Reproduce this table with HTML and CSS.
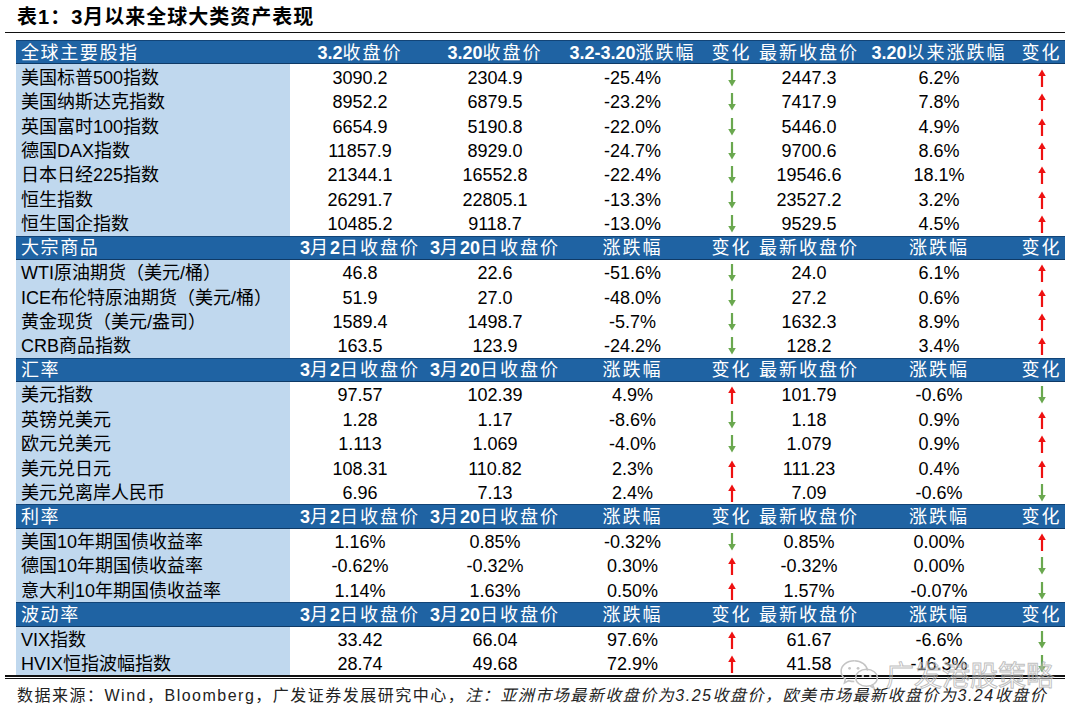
FILE: index.html
```html
<!DOCTYPE html>
<html lang="zh-CN">
<head>
<meta charset="utf-8">
<title>表1：3月以来全球大类资产表现</title>
<link rel="stylesheet" href="styles.css">
</head>
<body>
<svg class="defs" width="0" height="0" aria-hidden="true">
  <defs>
    <symbol id="up" viewBox="0 0 10 18"><line x1="5" y1="4" x2="5" y2="18" stroke="#ee1111" stroke-width="2.2"/><polygon points="1.2,7 5,0.5 8.8,7" fill="#ee1111"/></symbol>
    <symbol id="dn" viewBox="0 0 10 18"><line x1="5" y1="0" x2="5" y2="14" stroke="#6aa84f" stroke-width="2.2"/><polygon points="1.2,11 5,17.5 8.8,11" fill="#6aa84f"/></symbol>
  </defs>
</svg>
<div class="page">
  <div class="title"><b class="num">表1</b>：<b class="num">3</b>月以来全球大类资产表现</div>
  <div class="table">
    <div class="hd lab">全球主要股指</div><div class="hd"><b>3.2</b>收盘价</div><div class="hd"><b>3.20</b>收盘价</div><div class="hd"><b>3.2-3.20</b>涨跌幅</div><div class="hd">变化</div><div class="hd">最新收盘价</div><div class="hd"><b>3.20</b>以来涨跌幅</div><div class="hd">变化</div>

    <div class="lab">美国标普500指数</div><div>3090.2</div><div>2304.9</div><div>-25.4%</div><div><svg class="ar"><use href="#dn"/></svg></div><div>2447.3</div><div>6.2%</div><div><svg class="ar"><use href="#up"/></svg></div>
    <div class="lab">美国纳斯达克指数</div><div>8952.2</div><div>6879.5</div><div>-23.2%</div><div><svg class="ar"><use href="#dn"/></svg></div><div>7417.9</div><div>7.8%</div><div><svg class="ar"><use href="#up"/></svg></div>
    <div class="lab">英国富时100指数</div><div>6654.9</div><div>5190.8</div><div>-22.0%</div><div><svg class="ar"><use href="#dn"/></svg></div><div>5446.0</div><div>4.9%</div><div><svg class="ar"><use href="#up"/></svg></div>
    <div class="lab">德国DAX指数</div><div>11857.9</div><div>8929.0</div><div>-24.7%</div><div><svg class="ar"><use href="#dn"/></svg></div><div>9700.6</div><div>8.6%</div><div><svg class="ar"><use href="#up"/></svg></div>
    <div class="lab">日本日经225指数</div><div>21344.1</div><div>16552.8</div><div>-22.4%</div><div><svg class="ar"><use href="#dn"/></svg></div><div>19546.6</div><div>18.1%</div><div><svg class="ar"><use href="#up"/></svg></div>
    <div class="lab">恒生指数</div><div>26291.7</div><div>22805.1</div><div>-13.3%</div><div><svg class="ar"><use href="#dn"/></svg></div><div>23527.2</div><div>3.2%</div><div><svg class="ar"><use href="#up"/></svg></div>
    <div class="lab">恒生国企指数</div><div>10485.2</div><div>9118.7</div><div>-13.0%</div><div><svg class="ar"><use href="#dn"/></svg></div><div>9529.5</div><div>4.5%</div><div><svg class="ar"><use href="#up"/></svg></div>

    <div class="hd lab">大宗商品</div><div class="hd"><b>3</b>月<b>2</b>日收盘价</div><div class="hd"><b>3</b>月<b>20</b>日收盘价</div><div class="hd">涨跌幅</div><div class="hd">变化</div><div class="hd">最新收盘价</div><div class="hd">涨跌幅</div><div class="hd">变化</div>

    <div class="lab">WTI原油期货（美元/桶）</div><div>46.8</div><div>22.6</div><div>-51.6%</div><div><svg class="ar"><use href="#dn"/></svg></div><div>24.0</div><div>6.1%</div><div><svg class="ar"><use href="#up"/></svg></div>
    <div class="lab">ICE布伦特原油期货（美元/桶）</div><div>51.9</div><div>27.0</div><div>-48.0%</div><div><svg class="ar"><use href="#dn"/></svg></div><div>27.2</div><div>0.6%</div><div><svg class="ar"><use href="#up"/></svg></div>
    <div class="lab">黄金现货（美元/盎司）</div><div>1589.4</div><div>1498.7</div><div>-5.7%</div><div><svg class="ar"><use href="#dn"/></svg></div><div>1632.3</div><div>8.9%</div><div><svg class="ar"><use href="#up"/></svg></div>
    <div class="lab">CRB商品指数</div><div>163.5</div><div>123.9</div><div>-24.2%</div><div><svg class="ar"><use href="#dn"/></svg></div><div>128.2</div><div>3.4%</div><div><svg class="ar"><use href="#up"/></svg></div>

    <div class="hd lab">汇率</div><div class="hd"><b>3</b>月<b>2</b>日收盘价</div><div class="hd"><b>3</b>月<b>20</b>日收盘价</div><div class="hd">涨跌幅</div><div class="hd">变化</div><div class="hd">最新收盘价</div><div class="hd">涨跌幅</div><div class="hd">变化</div>

    <div class="lab">美元指数</div><div>97.57</div><div>102.39</div><div>4.9%</div><div><svg class="ar"><use href="#up"/></svg></div><div>101.79</div><div>-0.6%</div><div><svg class="ar"><use href="#dn"/></svg></div>
    <div class="lab">英镑兑美元</div><div>1.28</div><div>1.17</div><div>-8.6%</div><div><svg class="ar"><use href="#dn"/></svg></div><div>1.18</div><div>0.9%</div><div><svg class="ar"><use href="#up"/></svg></div>
    <div class="lab">欧元兑美元</div><div>1.113</div><div>1.069</div><div>-4.0%</div><div><svg class="ar"><use href="#dn"/></svg></div><div>1.079</div><div>0.9%</div><div><svg class="ar"><use href="#up"/></svg></div>
    <div class="lab">美元兑日元</div><div>108.31</div><div>110.82</div><div>2.3%</div><div><svg class="ar"><use href="#up"/></svg></div><div>111.23</div><div>0.4%</div><div><svg class="ar"><use href="#up"/></svg></div>
    <div class="lab">美元兑离岸人民币</div><div>6.96</div><div>7.13</div><div>2.4%</div><div><svg class="ar"><use href="#up"/></svg></div><div>7.09</div><div>-0.6%</div><div><svg class="ar"><use href="#dn"/></svg></div>

    <div class="hd lab">利率</div><div class="hd"><b>3</b>月<b>2</b>日收盘价</div><div class="hd"><b>3</b>月<b>20</b>日收盘价</div><div class="hd">涨跌幅</div><div class="hd">变化</div><div class="hd">最新收盘价</div><div class="hd">涨跌幅</div><div class="hd">变化</div>

    <div class="lab">美国10年期国债收益率</div><div>1.16%</div><div>0.85%</div><div>-0.32%</div><div><svg class="ar"><use href="#dn"/></svg></div><div>0.85%</div><div>0.00%</div><div><svg class="ar"><use href="#up"/></svg></div>
    <div class="lab">德国10年期国债收益率</div><div>-0.62%</div><div>-0.32%</div><div>0.30%</div><div><svg class="ar"><use href="#up"/></svg></div><div>-0.32%</div><div>0.00%</div><div><svg class="ar"><use href="#dn"/></svg></div>
    <div class="lab">意大利10年期国债收益率</div><div>1.14%</div><div>1.63%</div><div>0.50%</div><div><svg class="ar"><use href="#up"/></svg></div><div>1.57%</div><div>-0.07%</div><div><svg class="ar"><use href="#dn"/></svg></div>

    <div class="hd lab">波动率</div><div class="hd"><b>3</b>月<b>2</b>日收盘价</div><div class="hd"><b>3</b>月<b>20</b>日收盘价</div><div class="hd">涨跌幅</div><div class="hd">变化</div><div class="hd">最新收盘价</div><div class="hd">涨跌幅</div><div class="hd">变化</div>

    <div class="lab">VIX指数</div><div>33.42</div><div>66.04</div><div>97.6%</div><div><svg class="ar"><use href="#up"/></svg></div><div>61.67</div><div>-6.6%</div><div><svg class="ar"><use href="#dn"/></svg></div>
    <div class="lab">HVIX恒指波幅指数</div><div>28.74</div><div>49.68</div><div>72.9%</div><div><svg class="ar"><use href="#up"/></svg></div><div>41.58</div><div>-16.3%</div><div><svg class="ar"><use href="#dn"/></svg></div>
  </div>
  <div class="rule"></div>
  <div class="source">数据来源：Wind，Bloomberg，广发证券发展研究中心，<i>注：亚洲市场最新收盘价为3.25收盘价，欧美市场最新收盘价为3.24收盘价</i></div>

  <div class="watermark">
    <svg class="wx" viewBox="0 0 44 34" aria-hidden="true">
      <path d="M17 3C9 3 3 8 3 14c0 3.4 1.8 6.3 4.6 8.3L6.5 26.5l4.6-2.4c1.8.6 3.8.9 5.9.9" fill="none" stroke="#c4c4c4" stroke-width="1.6"/>
      <path d="M17 3c7.5 0 13.5 4.6 14 10.4" fill="none" stroke="#c4c4c4" stroke-width="1.6"/>
      <ellipse cx="30" cy="21" rx="11.5" ry="9" fill="none" stroke="#c4c4c4" stroke-width="1.6"/>
      <path d="M36.5 28.5l1.6 3.6-4.2-2.2" fill="none" stroke="#c4c4c4" stroke-width="1.6"/>
      <circle cx="12" cy="11" r="1.5" fill="#c4c4c4"/><circle cx="21" cy="11" r="1.5" fill="#c4c4c4"/>
      <circle cx="26" cy="19" r="1.3" fill="#c4c4c4"/><circle cx="34" cy="19" r="1.3" fill="#c4c4c4"/>
    </svg>
    <span class="wm-text">广发港股策略</span>
  </div>
</div>
</body>
</html>
```

FILE: styles.css
```css
html, body {
  margin: 0;
  padding: 0;
  background: #ffffff;
}
.defs {
  position: absolute;
  width: 0;
  height: 0;
}
.page {
  position: relative;
  width: 1060px;
  padding-left: 5px;
  font-family: "Liberation Sans", "Noto Sans CJK SC", sans-serif;
  color: #000;
}
.title {
  height: 32px;
  line-height: 35px;
  padding-left: 12px;
  font-size: 20px;
  font-weight: 700;
  letter-spacing: 1px;
  border-bottom: 1.5px solid #111;
}
.title .num {
  font-weight: 700;
}
.table {
  margin-top: 7px;
  margin-left: 11px;
  display: grid;
  grid-template-columns: 274px 140px 130px 145px 53px 102px 158px 47px;
  grid-auto-rows: 24.45px;
  font-size: 18px;
}
.table > div {
  display: flex;
  align-items: center;
  justify-content: center;
  white-space: nowrap;
  line-height: 1;
  padding-top: 2px;
  box-sizing: border-box;
}
.table > .lab {
  justify-content: flex-start;
  padding-left: 5px;
  background: #c0d8ee;
  font-weight: 400;
}
.table > .hd {
  background: #1f63a3;
  color: #ffffff;
  letter-spacing: 2px;
  border-top: 1px solid #124477;
  border-bottom: 1px solid #0f3a66;
  padding-top: 1px;
}
.table > .hd.lab {
  background: #1f63a3;
  letter-spacing: 1.6px;
}
.hd b {
  font-weight: 700;
  letter-spacing: 0;
}
.ar {
  width: 10px;
  height: 18px;
  display: block;
}
.rule {
  height: 1px;
  border-top: 2px solid #111;
  border-bottom: 1px solid #111;
  width: 1060px;
}
.source {
  padding-left: 12px;
  margin-top: 7px;
  font-size: 16px;
  line-height: 20px;
  letter-spacing: 1.5px;
  color: #222;
  white-space: nowrap;
}
.source i {
  font-style: italic;
}
.watermark {
  position: absolute;
  left: 838px;
  top: 654px;
  display: flex;
  align-items: center;
  gap: 6px;
  pointer-events: none;
}
.wx {
  width: 42px;
  height: 32px;
}
.wm-text {
  font-size: 28px;
  color: rgba(255, 255, 255, 0.25);
  -webkit-text-stroke: 1px rgba(170, 170, 170, 0.75);
  font-family: "Noto Sans CJK SC", sans-serif;
}
```
